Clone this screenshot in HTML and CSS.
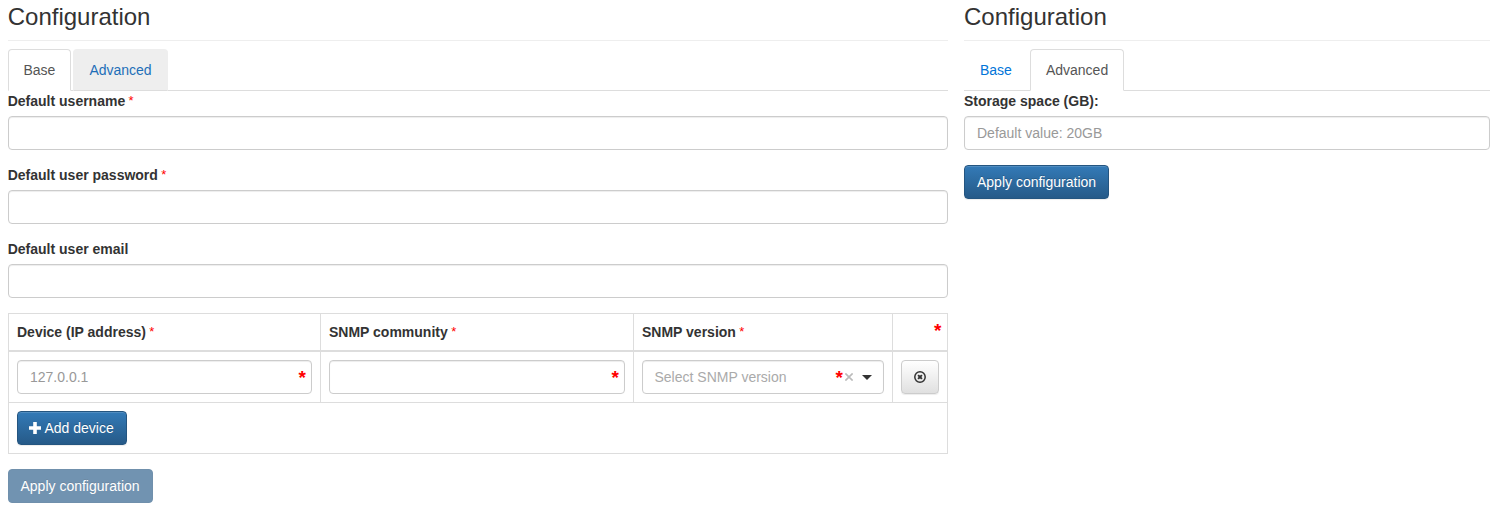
FILE: index.html
```
<!DOCTYPE html>
<html lang="en">
<head>
<meta charset="utf-8">
<title>Configuration</title>
<link rel="stylesheet" href="styles.css">
</head>
<body>
<main class="page">
  <section class="panel panel-base">
    <h3 class="title">Configuration</h3>
    <nav class="tabs">
      <a class="tab active">Base</a>
      <a class="tab hover">Advanced</a>
    </nav>
    <div class="group"><label for="username">Default username <span class="req">*</span></label><input id="username" class="control" type="text"></div>
    <div class="group"><label for="password">Default user password <span class="req">*</span></label><input id="password" class="control" type="text"></div>
    <div class="group"><label for="email">Default user email</label><input id="email" class="control" type="text"></div>
    <table class="devices">
      <colgroup><col class="col-device"><col class="col-community"><col class="col-version"><col class="col-action"></colgroup>
      <thead>
        <tr>
          <th>Device (IP address) <span class="req">*</span></th>
          <th>SNMP community <span class="req">*</span></th>
          <th>SNMP version <span class="req">*</span></th>
          <th><div class="field"><span class="mark mark-head">*</span></div></th>
        </tr>
      </thead>
      <tbody>
        <tr>
          <td><div class="field"><input class="control" type="text" placeholder="127.0.0.1"><span class="mark">*</span></div></td>
          <td><div class="field"><input class="control" type="text"><span class="mark">*</span></div></td>
          <td>
            <div class="field control select">
              <span class="select-text">Select SNMP version</span>
              <span class="mark mark-select">*</span>
              <svg class="clear" width="8" height="8" viewBox="0 0 8 8"><path d="M.4.4l7.2 7.2M7.6.4L.4 7.6" stroke="#bbb" stroke-width="1.6" fill="none"/></svg>
              <svg class="caret" width="10" height="5" viewBox="0 0 10 5"><path d="M0 0h10L5 5z" fill="#333"/></svg>
            </div>
          </td>
          <td>
            <button class="btn btn-default" type="button" aria-label="Remove">
              <svg width="12" height="12" viewBox="0 0 12 12" fill="none" stroke="#333"><circle cx="6" cy="6" r="5.2" stroke-width="1.5"/><path d="M4.1 4.1l3.8 3.8M7.9 4.1L4.1 7.9" stroke-width="2"/></svg>
            </button>
          </td>
        </tr>
        <tr>
          <td colspan="4">
            <button class="btn btn-primary btn-add" type="button"><svg class="plus" width="12" height="12" viewBox="0 0 12 12"><path d="M4.2 0h3.6v4.2H12v3.6H7.8V12H4.2V7.8H0V4.2h4.2z" fill="#fff"/></svg>Add device</button>
          </td>
        </tr>
      </tbody>
    </table>
    <button class="btn btn-primary btn-apply disabled" type="button">Apply configuration</button>
  </section>
  <section class="panel panel-advanced">
    <h3 class="title">Configuration</h3>
    <nav class="tabs">
      <a class="tab">Base</a>
      <a class="tab active">Advanced</a>
    </nav>
    <div class="group"><label for="storage">Storage space (GB):</label><input id="storage" class="control" type="text" placeholder="Default value: 20GB"></div>
    <button class="btn btn-primary btn-apply" type="button">Apply configuration</button>
  </section>
</main>
</body>
</html>
```
FILE: styles.css
```
* { box-sizing: border-box; }
body {
  margin: 0;
  background: #fff;
  color: #333;
  font: 14px/20px "Liberation Sans", Arial, sans-serif;
}
.page { display: flex; gap: 16px; padding: 4px 0 0 8px; align-items: flex-start; }
.panel-base { width: 940px; }
.panel-advanced { width: 526px; }
.title {
  margin: 0 0 8px;
  height: 37px;
  border-bottom: 1px solid #eee;
  font-size: 24px;
  font-weight: 400;
  line-height: 26px;
}
.panel-base .title, .panel-base label { text-indent: -0.3px; }
.tabs { display: flex; height: 42px; border-bottom: 1px solid #ddd; }
.tab {
  height: 42px;
  margin-right: 2px;
  padding: 10px 15px;
  border: 1px solid transparent;
  border-radius: 4px 4px 0 0;
  color: #0275d8;
}
.tab.hover { background: #eee; border-color: #eee #eee #ddd; color: #1d6fb8; }
.tab.active { background: #fff; border-color: #ddd #ddd #fff; color: #555; }
.panel-base .tab.active { width: 63px; padding-left: 14.5px; padding-right: 0; }
.panel-base .tab.hover { width: 95px; padding-left: 15.4px; padding-right: 0; }
.group { margin-bottom: 15px; }
label { display: block; margin-bottom: 5px; font-weight: 700; }
.req { position: relative; top: -1px; margin-left: -0.5px; color: #f00; font-size: 13px; font-weight: 400; line-height: 1; }
.control {
  display: block;
  width: 100%;
  height: 34px;
  padding: 6px 12px;
  background: #fff;
  border: 1px solid #ccc;
  border-radius: 4px;
  box-shadow: inset 0 1px 1px rgba(0, 0, 0, .075);
  color: #555;
  font: inherit;
}
.control::placeholder { color: #999; opacity: 1; }
.devices {
  width: 940px;
  margin-bottom: 15px;
  border: 1px solid #ddd;
  border-spacing: 0;
  border-collapse: separate;
  table-layout: fixed;
}
.col-device { width: 312px; }
.col-community { width: 313px; }
.col-version { width: 259px; }
.col-action { width: 54px; }
th, td { padding: 8px; border-right: 1px solid #ddd; border-bottom: 1px solid #ddd; text-align: left; }
th { height: 38px; border-bottom-width: 2px; }
th:last-child, td:last-child { border-right: 0; }
tr:last-child td { border-bottom: 0; }
tbody tr { height: 51px; }
tbody tr:last-child { height: 50px; }
.field { position: relative; }
.mark {
  position: absolute;
  top: 8px;
  right: 6px;
  color: #f00;
  font-size: 19px;
  font-weight: 700;
  line-height: 20px;
}
.mark-head { top: -11px; right: -2.5px; }
.mark-select { top: 7px; right: 40px; }
.select { display: flex; align-items: center; padding-left: 11.5px; }
.select-text { flex: 1; color: #aaa; }
.clear { margin-right: 9px; }
.caret { margin-right: -1px; }
.btn {
  display: flex;
  align-items: center;
  height: 34px;
  padding: 6px 12px;
  border: 1px solid #ccc;
  border-radius: 4px;
  font: inherit;
  white-space: nowrap;
}
.btn-default {
  background: linear-gradient(#fff, #e0e0e0);
  box-shadow: inset 0 1px 0 rgba(255, 255, 255, .15), 0 1px 1px rgba(0, 0, 0, .075);
}
.btn-primary {
  background: linear-gradient(#337ab7, #265a88);
  border-color: #245580;
  box-shadow: inset 0 1px 0 rgba(255, 255, 255, .15), 0 1px 1px rgba(0, 0, 0, .075);
  color: #fff;
  text-shadow: 0 -1px 0 rgba(0, 0, 0, .2);
}
.btn-add { width: 110px; padding: 6px 0 6px 11px; }
.btn-apply { width: 145px; }
.btn-primary.disabled { padding-left: 11.5px; padding-right: 0; background: #265a88; box-shadow: none; opacity: .65; }
.plus { margin-right: 3.5px; }
```
